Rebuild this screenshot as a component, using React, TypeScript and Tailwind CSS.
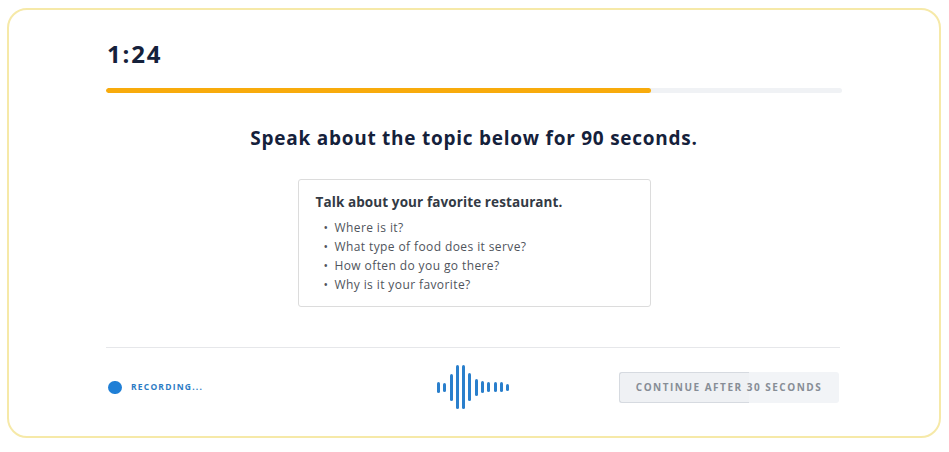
import React from 'react';

const bars = [11, 9, 27, 44, 44, 28, 17, 12, 10, 10, 10, 7];

const Waveform = () => (
	<div className="flex items-center gap-[3.3px] h-[46px]">
		{bars.map((h, i) => (
			<div key={i} className="w-[3px] rounded-full bg-[#2a7fcc]" style={{ height: h }} />
		))}
	</div>
);

const App = () => {
	const prompts = [
		'Where is it?',
		'What type of food does it serve?',
		'How often do you go there?',
		'Why is it your favorite?',
	];

	return (
		<div className="w-[949px] h-[452px] bg-white pt-[8px] pl-[7px] font-['Open_Sans',sans-serif]">
			<div className="w-[934px] h-[430px] rounded-[20px] border-2 border-[#f6e9a8] bg-white px-[97px] flex flex-col">
				<div className="pt-[32px] h-[78px] text-[24px] font-bold text-[#15213b] leading-none tracking-[1.8px] pl-[1px]">
					1:24
				</div>
				<div className="h-[5px] w-[736px] rounded-full bg-[#f0f2f5] overflow-hidden">
					<div className="h-full w-[545px] rounded-full bg-[#f8ab0c]" />
				</div>
				<div className="mt-[34px] text-center text-[19px] font-bold text-[#15213b] leading-[22px] tracking-[0.75px]">
					Speak about the topic below for 90 seconds.
				</div>
				<div className="flex justify-center mt-[30px]">
					<div className="w-[353px] h-[128px] rounded-[3px] border border-[#dcdcdc] pl-[17px] pt-[14px]">
						<div className="text-[13.5px] font-bold text-[#333a45] leading-[16px] tracking-[0.1px]">
							Talk about your favorite restaurant.
						</div>
						<ul className="mt-[8px] flex flex-col">
							{prompts.map(p => (
								<li key={p} className="flex items-center h-[19px] text-[12px] text-[#4f545c] pl-[8px] tracking-[0.4px]">
									<span className="w-[11px]">•</span>
									<span>{p}</span>
								</li>
							))}
						</ul>
					</div>
				</div>
				<div className="mt-[40px] h-px w-[734px] bg-[#e6e7ea]" />
				<div className="mt-[16px] flex items-center w-[734px]">
					<div className="flex items-center w-[331px] pl-[2px]">
						<div className="w-[14px] h-[13px] rounded-full bg-[#1f7fd6]" />
						<span className="ml-[9px] text-[8.5px] font-bold tracking-[1.2px] text-[#2c7bc4]">
							RECORDING...
						</span>
					</div>
					<Waveform />
					<div className="flex-1" />
					<div className="relative w-[220px] h-[31px] mr-[1px] rounded-[3px] bg-[#f2f4f7]">
						<div className="absolute left-0 top-0 h-full w-[130px] rounded-l-[3px] border border-r-0 border-[#d6dae0] bg-[#eff1f4]" />
						<div className="relative h-full flex items-center justify-center text-[10px] font-bold tracking-[1.5px] text-[#878d96]">
							CONTINUE AFTER 30 SECONDS
						</div>
					</div>
				</div>
			</div>
		</div>
	);
};

export default App;
